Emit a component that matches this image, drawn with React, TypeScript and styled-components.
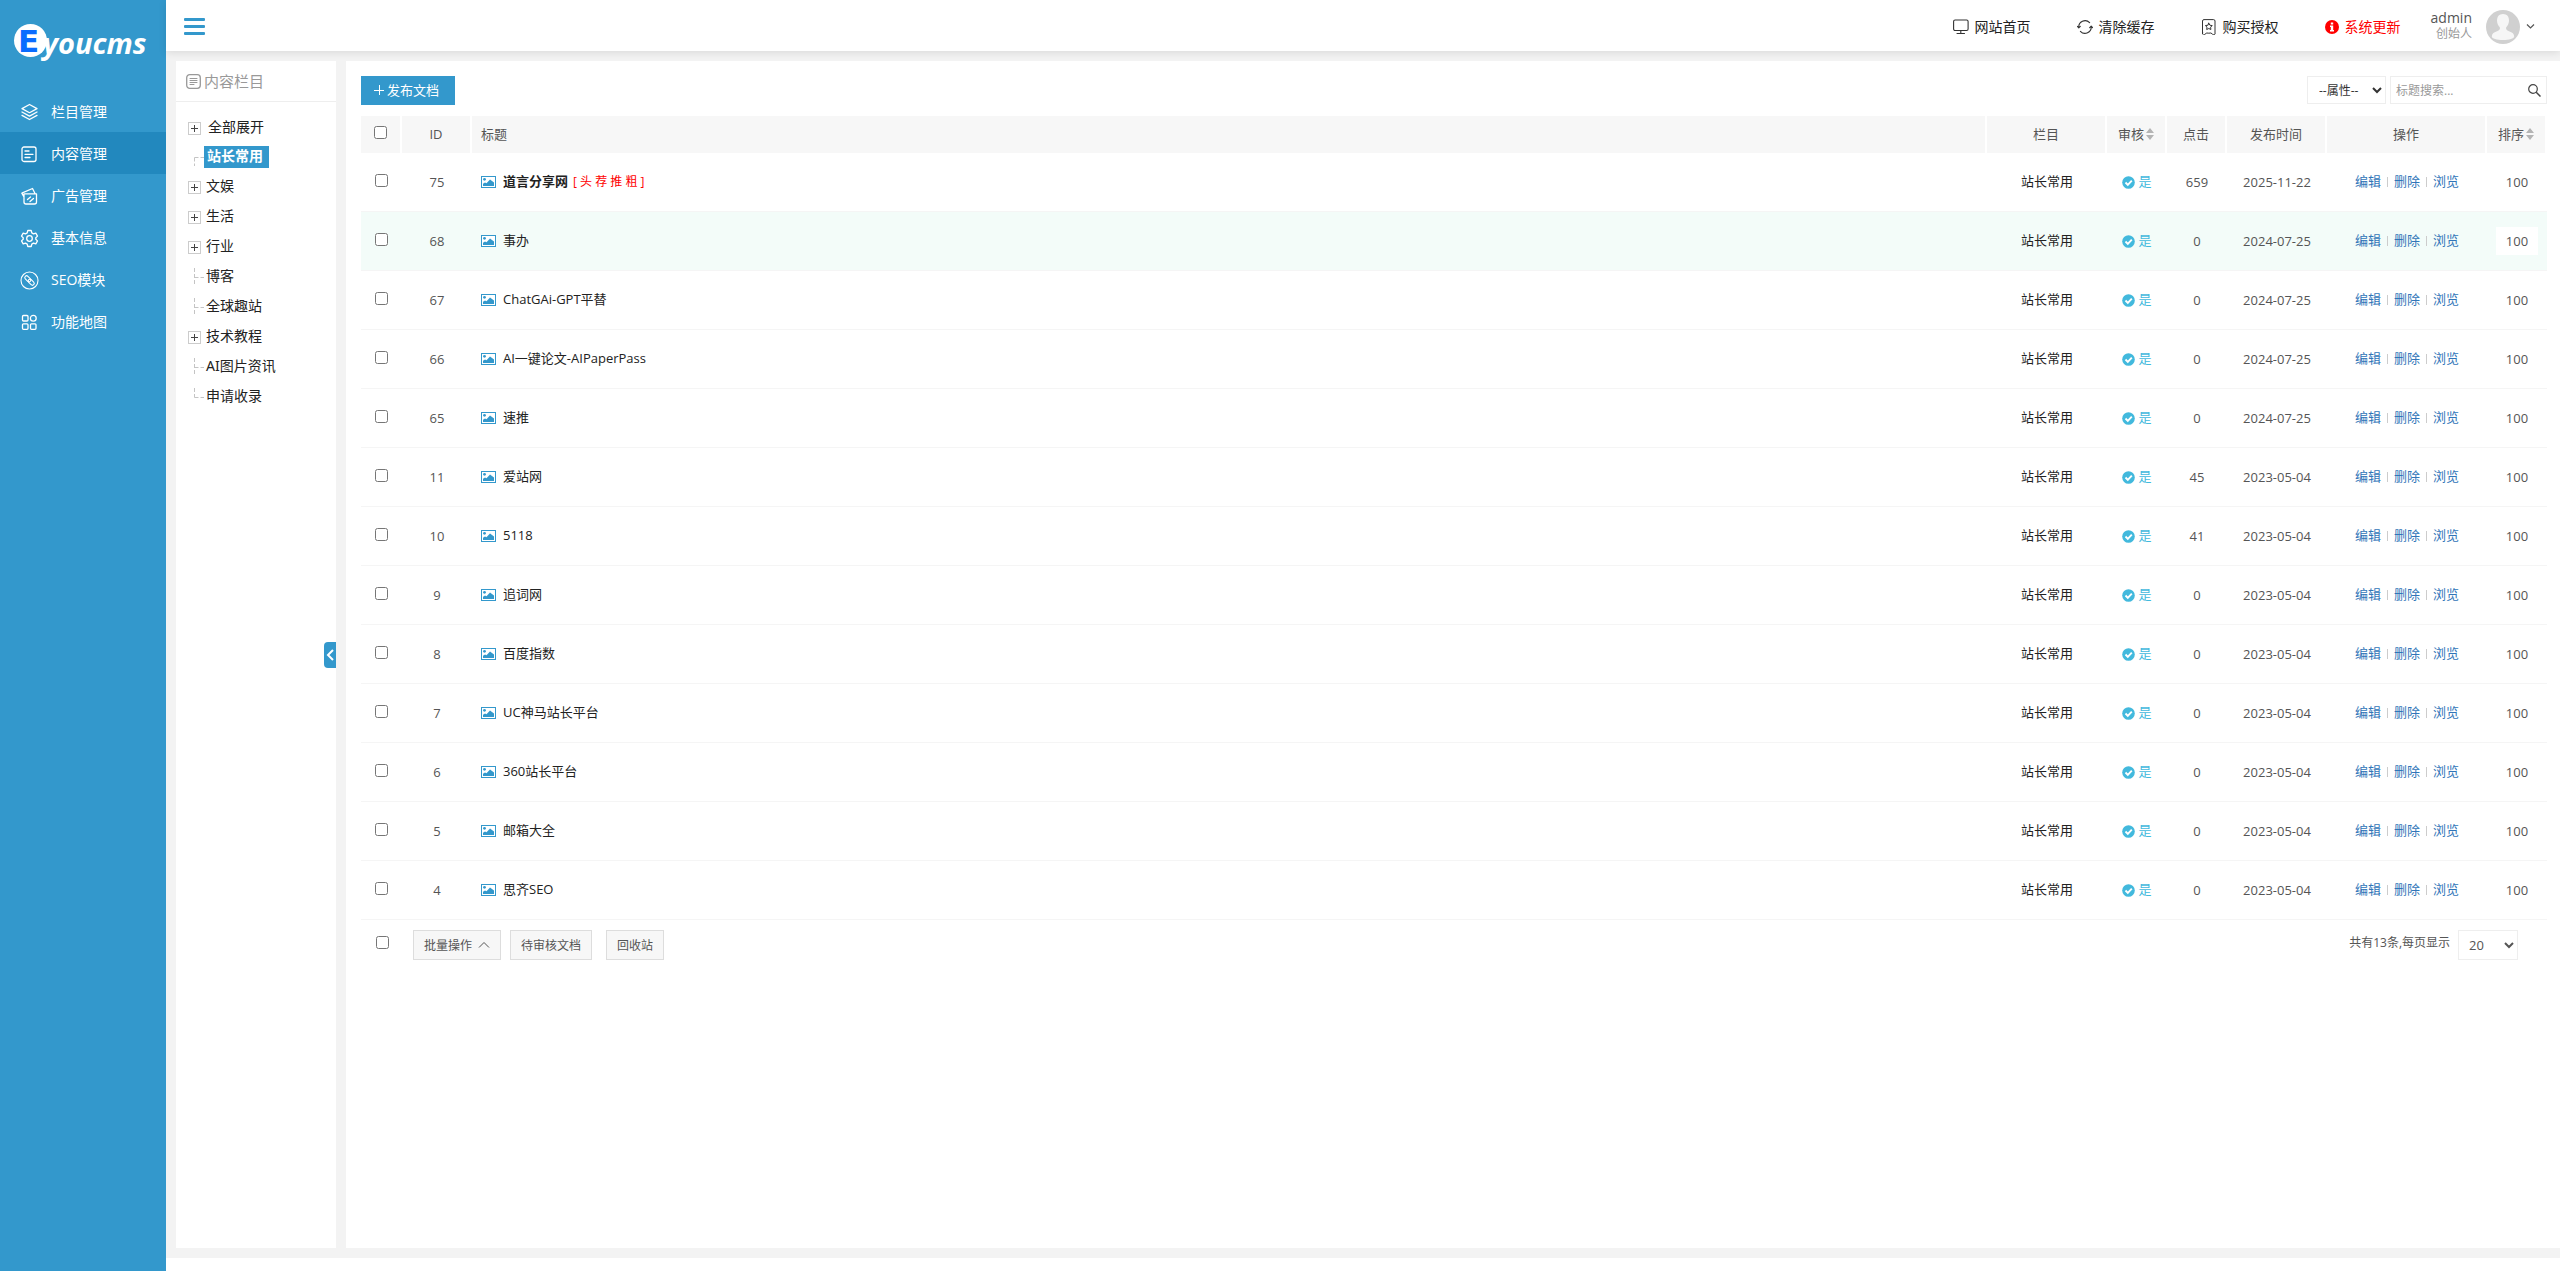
import React from "react";
import styled, { createGlobalStyle, css } from "styled-components";

const font = `"Open Sans", "Noto Sans CJK SC", sans-serif`;
const treeFont = `"Noto Sans", "Noto Sans CJK SC", sans-serif`;
const blue = "#3398cc";

const GlobalStyle = createGlobalStyle`
  *, *::before, *::after { box-sizing: border-box; }
  body { margin: 0; background: #fff; color: #222; font: 13px/20px ${font}; }
  button, input, select { font-family: inherit; }
  a { text-decoration: none; color: inherit; }
  ul { list-style: none; margin: 0; padding: 0; }
`;

const Shell = styled.div`
  display: flex;
  min-height: 100vh;
`;

/* ---------- sidebar ---------- */

const Sidebar = styled.aside`
  flex: 0 0 166px;
  background: ${blue};
`;

const LogoLink = styled.a`
  display: block;
  height: 90px;
  padding: 20px 0 0 12px;
`;

const NavLink = styled.a<{ $active?: boolean }>`
  display: flex;
  align-items: center;
  gap: 12px;
  height: 42px;
  padding: 2px 0 0 20px;
  color: #fff;
  font-size: 14px;
  background: ${(p) => (p.$active ? "#2288be" : "transparent")};
  svg { flex: none; }
`;

/* ---------- top bar ---------- */

const Page = styled.div`
  flex: 1;
  min-width: 0;
  display: flex;
  flex-direction: column;
`;

const TopBar = styled.header`
  position: relative;
  z-index: 1;
  display: flex;
  align-items: center;
  height: 51px;
  padding: 2px 25px 0 18px;
  background: #fff;
  box-shadow: 0 2px 8px rgba(0, 0, 0, 0.1);
`;

const PlainButton = styled.button`
  display: flex;
  align-items: center;
  padding: 0;
  border: 0;
  background: none;
  color: inherit;
  line-height: 20px;
  cursor: pointer;
`;

const TopLinks = styled.nav`
  display: flex;
  gap: 46px;
  margin: 0 30px 0 auto;
`;

const TopLink = styled.a<{ $alert?: boolean }>`
  display: flex;
  align-items: center;
  gap: 6px;
  font-size: 14px;
  color: ${(p) => (p.$alert ? "#f00" : "#222")};
`;

const Account = styled(PlainButton)`
  gap: 6px;
  svg { flex: none; }
`;

const AccountText = styled.span`
  display: flex;
  flex-direction: column;
  align-items: flex-end;
  margin-right: 8px;
  padding-bottom: 2px;
  font-size: 12px;
  line-height: 16px;
  color: #999;
`;

const AccountName = styled.span`
  font-size: 14px;
  color: #555;
`;

/* ---------- content ---------- */

const Content = styled.div`
  flex: 1;
  display: flex;
  gap: 10px;
  margin-bottom: 13px;
  padding: 10px 0 10px 10px;
  background: #f3f3f3;
`;

const TreePanel = styled.section`
  position: relative;
  flex: 0 0 160px;
  background: #fff;
`;

const TreeTitle = styled.h2`
  display: flex;
  align-items: center;
  gap: 3px;
  height: 41px;
  margin: 0;
  padding-left: 10px;
  border-bottom: 1px solid #eee;
  color: #999;
  font-size: 15px;
  font-weight: 400;
`;

const Tree = styled.ul`
  padding: 12px 0 0 12px;
  font-family: ${treeFont};
`;

const TreeRow = styled.li<{ $root?: boolean }>`
  display: flex;
  align-items: center;
  height: ${(p) => (p.$root ? 28 : 30)}px;
`;

const Expander = styled.button`
  display: flex;
  width: 13px;
  height: 13px;
  margin-right: 3px;
  padding: 0;
  border: 1px solid #ccc;
  background: #fff;
`;

const Branch = styled.svg`
  flex: none;
`;

const TreeLabel = styled.a<{ $active?: boolean; $root?: boolean }>`
  padding: 0 7px 2px ${(p) => (p.$root ? 4 : 2)}px;
  font-size: 14px;
  line-height: 20px;
  white-space: nowrap;
  ${(p) =>
    p.$active &&
    css`
      padding-left: 3px;
      padding-right: 6px;
      background: ${blue};
      color: #fff;
      font-weight: 700;
    `}
`;

const CollapseTab = styled.button`
  position: absolute;
  right: 0;
  top: 50%;
  display: flex;
  align-items: center;
  justify-content: center;
  width: 12px;
  height: 26px;
  padding: 0;
  border: 0;
  border-radius: 4px 0 0 4px;
  background: ${blue};
  transform: translateY(-50%);
`;

const Main = styled.main`
  flex: 1;
  min-width: 0;
  padding: 15px 13px 15px 15px;
  background: #fff;
`;

const Toolbar = styled.div`
  display: flex;
  gap: 4px;
  height: 29px;
  margin-bottom: 11px;
`;

const PublishButton = styled.button`
  display: flex;
  align-items: center;
  gap: 3px;
  width: 94px;
  margin-right: auto;
  padding: 0 0 2px 13px;
  border: 0;
  background: ${blue};
  color: #fff;
  font-size: 13px;
`;

const Select = styled.select`
  border: 1px solid #eee;
  background: #fff;
  color: #333;
  outline: 0;
  font-size: 12px;
`;

const AttributeSelect = styled(Select)`
  width: 79px;
  height: 28px;
  padding: 0 0 0 7px;
`;

const SearchBox = styled.form`
  display: flex;
  align-items: center;
  width: 157px;
  height: 28px;
  padding: 0 5px;
  border: 1px solid #eee;
`;

const SearchInput = styled.input`
  flex: 1;
  min-width: 0;
  padding: 0;
  border: 0;
  outline: 0;
  font-size: 12px;
  &::placeholder { color: #999; }
`;

/* ---------- table ---------- */

const Table = styled.table`
  width: 100%;
  table-layout: fixed;
  border-collapse: separate;
  border-spacing: 0;
`;

const Th = styled.th<{ $left?: boolean; $check?: boolean }>`
  height: 37px;
  padding: 0 ${(p) => (p.$left ? 9 : 0)}px ${(p) => (p.$check ? 0 : 2)}px;
  border-right: 2px solid #fff;
  background: #f7f7f7;
  color: #555;
  font-weight: 400;
  text-align: ${(p) => (p.$left ? "left" : "center")};
`;

const Row = styled.tr<{ $hover?: boolean }>`
  background: ${(p) => (p.$hover ? "#f3fcf9" : "#fff")};
`;

const Td = styled.td<{ $dark?: boolean; $text?: boolean }>`
  height: 59px;
  padding: 0 0 ${(p) => (p.$text ? 2 : 0)}px;
  border-bottom: 1px solid #f5f5f5;
  color: ${(p) => (p.$dark ? "#222" : "#555")};
  text-align: center;
`;

const Inline = styled.div<{ $gap?: number; $left?: boolean }>`
  display: flex;
  align-items: center;
  justify-content: ${(p) => (p.$left ? "flex-start" : "center")};
  gap: ${(p) => p.$gap ?? 0}px;
  padding-left: ${(p) => (p.$left ? 9 : 0)}px;
`;

const Check = styled.input`
  display: block;
  width: 13px;
  height: 13px;
  margin: 0 auto 4px;
`;

const TitleLink = styled.a<{ $bold?: boolean }>`
  padding-bottom: 2px;
  font-weight: ${(p) => (p.$bold ? 700 : 400)};
`;

const Flags = styled.span`
  margin-left: -2px;
  color: #f00;
  font-size: 12px;
`;

const Approved = styled(PlainButton)`
  gap: 3px;
  margin: 0 auto;
  color: #42b9dd;
  font-size: 13px;
`;

const ApprovedText = styled.span`
  padding-bottom: 2px;
`;

const ActionLink = styled.a`
  padding-bottom: 2px;
  color: #3175b8;
`;

const Divider = styled.span`
  width: 1px;
  height: 10px;
  background: #ccc;
`;

const SortInput = styled.input`
  display: block;
  width: 42px;
  height: 28px;
  margin: 0 auto;
  padding: 0;
  border: 0;
  background: #fff;
  color: #555;
  font-size: 13px;
  text-align: center;
`;

/* ---------- table footer ---------- */

const Footer = styled.div`
  display: flex;
  align-items: center;
  padding: 10px 29px 0 15px;
`;

const FooterCheck = styled(Check)`
  margin: 0 24px 5px 0;
`;

const FooterButton = styled.button<{ $gap: number }>`
  display: flex;
  align-items: center;
  gap: 6px;
  height: 30px;
  margin-right: ${(p) => p.$gap}px;
  padding: 0 10px;
  border: 1px solid #ddd;
  background: #f7f7f7;
  color: #555;
  font-size: 12px;
`;

const Summary = styled.label`
  display: flex;
  align-items: center;
  gap: 8px;
  margin-left: auto;
  color: #555;
  font-size: 12px;
`;

const SummaryText = styled.span`
  padding-bottom: 4px;
`;

const PageSize = styled(Select)`
  width: 60px;
  height: 30px;
  padding: 0 0 0 6px;
  color: #555;
  font-size: 13px;
`;

/* ---------- icons ---------- */

type LineProps = { size?: number; box?: number; color?: string; weight?: number; children: React.ReactNode };

const Line = ({ size = 19, box = 19, color = "#fff", weight = 1.3, children }: LineProps) => (
  <svg width={size} height={size} viewBox={`0 0 ${box} ${box}`} fill="none" stroke={color} strokeWidth={weight} strokeLinecap="round" strokeLinejoin="round" aria-hidden>
    {children}
  </svg>
);

const navIcons: Record<string, React.ReactNode> = {
  layers: (
    <Line>
      <path d="M9.5 1.500 17 5.600 9.500 9.700 2 5.600zM2 9l7.500 4.100L17 9M2 12.400l7.500 4.100L17 12.400" />
    </Line>
  ),
  doc: (
    <Line>
      <rect x="2" y="2" width="14" height="14.500" rx="2" />
      <path d="M5 6h4M5 9.300h8M5 12.500h5" />
    </Line>
  ),
  ad: (
    <Line>
      <path d="M4 6.800h12.500V15a2 2 0 0 1-2 2H6a2 2 0 0 1-2-2zM4 10 1.800 6.200 12.500 1.500l2.500 5M7.500 12.500 10.500 10M10 14.500l3.500-3" />
    </Line>
  ),
  gear: (
    <Line>
      <circle cx="9.500" cy="9.500" r="2.800" />
      <path d="M7.800 1.500h3.400l.6 2.400 1.700 1 2.300-.7 1.700 2.900-1.700 1.600v1.600l1.700 1.600-1.700 2.900-2.300-.7-1.700 1-.6 2.400H7.800l-.6-2.400-1.700-1-2.300.7-1.700-2.900 1.700-1.600V8.700L1.500 7.100l1.700-2.900 2.300.7 1.700-1z" />
    </Line>
  ),
  seo: (
    <Line weight={1.1}>
      <circle cx="9.500" cy="9.500" r="8.500" />
      <rect x="4.300" y="6" width="7" height="3.600" rx="1.800" transform="rotate(45 7.800 7.800)" />
      <rect x="7.700" y="9.400" width="7" height="3.600" rx="1.800" transform="rotate(45 11.200 11.200)" />
    </Line>
  ),
  grid: (
    <Line>
      <rect x="2.500" y="2.500" width="5.500" height="5.500" rx="1" />
      <circle cx="13.300" cy="5.200" r="2.900" />
      <rect x="2.500" y="10.800" width="5.500" height="5.500" rx="1" />
      <rect x="10.500" y="10.800" width="5.500" height="5.500" rx="1" />
    </Line>
  ),
};

const Logo = () => (
  <svg width="140" height="44" viewBox="12 20 140 44" aria-label="Eyoucms">
    <circle cx="30.500" cy="40.500" r="16.500" fill="#fff" />
    <text x="18" y="52" fontFamily="DejaVu Sans" fontWeight="700" fontSize="31" fill="#0a6cff">E</text>
    <text x="43" y="54" fontFamily="Open Sans" fontWeight="700" fontStyle="italic" fontSize="29" fill="#fff">youcms</text>
  </svg>
);

const MenuIcon = () => (
  <svg width="21" height="17" viewBox="0 0 21 17" fill={blue} aria-hidden>
    <rect y="0" width="21" height="3" rx="1" />
    <rect y="7" width="21" height="3" rx="1" />
    <rect y="14" width="21" height="3" rx="1" />
  </svg>
);

const MonitorIcon = () => (
  <Line size={16} box={16} color="#333" weight={1.1}>
    <rect x=".6" y="1" width="14.500" height="10.500" rx="1.500" />
    <path d="M7.800 11.500v3M4 14.500h7.500" />
  </Line>
);

const RefreshIcon = () => (
  <Line size={16} box={16} color="#333" weight={1.1}>
    <path d="M1.800 8.700a6.300 6.300 0 0 1 10.800-5M14.200 7.300a6.300 6.300 0 0 1-10.800 5M.4 7.300l1.400 1.600 1.500-1.600M12.700 8.700l1.500-1.600 1.400 1.600" />
  </Line>
);

const LicenseIcon = () => (
  <Line size={16} box={16} color="#333" weight={1}>
    <path d="M1.500 14V2A1.500 1.500 0 0 1 3 .6h9.500A1.500 1.500 0 0 1 14 2v12a1.300 1.300 0 0 1-2.500 1q-1.500-1.600-3.700-.8-2.200-.8-3.700.8a1.300 1.300 0 0 1-2.600-1z" />
    <path d="M7.800 4.200l1.100 2 2.300.4-1.600 1.600.3 2.300-2.100-1-2.100 1 .3-2.300-1.600-1.600 2.300-.4z" />
  </Line>
);

const AlertIcon = () => (
  <svg width="14" height="14" viewBox="0 0 14 14" aria-hidden>
    <circle cx="7" cy="7" r="7" fill="#f00" />
    <path d="M5.800 2.500h2.400v2H5.800zM5 5.500h3.200v4.500H9V11.500H5V10h.8V7H5z" fill="#fff" />
  </svg>
);

const Avatar = () => (
  <svg width="34" height="34" viewBox="0 0 34 34" aria-hidden>
    <circle cx="17" cy="17" r="17" fill="#d0d0d0" />
    <path d="M17 4c4 0 6 2.800 6 6.500 0 3-1.300 5.300-2.800 6.800-.6 2 .3 3 2.800 3.900 3.500 1.200 5.200 2.600 5.200 5.300 0 2.200-5.200 3.500-11.200 3.500S5.800 28.700 5.800 26.500c0-2.700 1.700-4.100 5.200-5.300 2.500-.9 3.400-1.900 2.800-3.900C12.300 15.800 11 13.500 11 10.500 11 6.800 13 4 17 4z" fill="#f6f6f6" />
  </svg>
);

const Chevron = ({ d = "M1 1.500 4.500 5 8 1.500", w = 9, h = 7, weight = 1.2 }) => (
  <svg width={w} height={h} viewBox={`0 0 ${w} ${h}`} fill="none" stroke="#555" strokeWidth={weight} aria-hidden>
    <path d={d} />
  </svg>
);

const ListIcon = () => (
  <Line size={15} box={15} color="#999">
    <rect x=".7" y=".7" width="13.600" height="13.600" rx="3" />
    <path d="M4 4.500h7M4 6.500h7M4 8.500h7M4 10.500h4" strokeWidth="1" />
  </Line>
);

const PictureIcon = () => (
  <svg width="15" height="12" viewBox="0 0 15 12" aria-hidden>
    <rect x=".5" y=".5" width="14" height="11" fill="#fff" stroke={blue} />
    <circle cx="3.500" cy="3.300" r="1.400" fill={blue} />
    <path d="M2 10V7.800l2-1.300 1.500.8L9 3.500l4 3v3.500z" fill={blue} />
  </svg>
);

const CheckedIcon = () => (
  <svg width="13" height="13" viewBox="0 0 13 13" aria-hidden>
    <circle cx="6.500" cy="6.500" r="6.300" fill="#42b9dd" />
    <path d="m3.500 6.500 2.300 2.300 4-4.200" fill="none" stroke="#fff" strokeWidth="1.900" />
  </svg>
);

const SortIcon = () => (
  <svg width="8" height="12" viewBox="0 0 8 12" fill="#b4b4b4" aria-hidden>
    <path d="M4 0 8 5H0zM4 12 8 7H0z" />
  </svg>
);

const SearchIcon = () => (
  <svg width="13" height="13" viewBox="0 0 13 13" fill="none" stroke="#444" aria-hidden>
    <circle cx="5" cy="5" r="4.300" strokeWidth="1.200" />
    <path d="m8.200 8.200 4.300 4.300" strokeWidth="1.500" />
  </svg>
);

const branchPaths = {
  first: "M6.500 9.500v9M6.500 9.500H16",
  middle: "M6.500 0v18M6.500 9.500H16",
  last: "M6.500 0v9.500M6.500 9.500H16",
};

/* ---------- data ---------- */

const nav = [
  ["layers", "栏目管理"],
  ["doc", "内容管理"],
  ["ad", "广告管理"],
  ["gear", "基本信息"],
  ["seo", "SEO模块"],
  ["grid", "功能地图"],
];

type Kind = "plus" | keyof typeof branchPaths;
const tree: { label: string; kind: Kind; root?: boolean; active?: boolean }[] = [
  { label: "全部展开", kind: "plus", root: true },
  { label: "站长常用", kind: "first", active: true },
  { label: "文娱", kind: "plus" },
  { label: "生活", kind: "plus" },
  { label: "行业", kind: "plus" },
  { label: "博客", kind: "middle" },
  { label: "全球趣站", kind: "middle" },
  { label: "技术教程", kind: "plus" },
  { label: "AI图片资讯", kind: "middle" },
  { label: "申请收录", kind: "last" },
];

const docs = [
  { id: 75, title: "道言分享网", flags: "[ 头 荐 推 粗 ]", clicks: 659, date: "2025-11-22" },
  { id: 68, title: "事办", clicks: 0, date: "2024-07-25", hover: true },
  { id: 67, title: "ChatGAi-GPT平替", clicks: 0, date: "2024-07-25" },
  { id: 66, title: "AI一键论文-AIPaperPass", clicks: 0, date: "2024-07-25" },
  { id: 65, title: "速推", clicks: 0, date: "2024-07-25" },
  { id: 11, title: "爱站网", clicks: 45, date: "2023-05-04" },
  { id: 10, title: "5118", clicks: 41, date: "2023-05-04" },
  { id: 9, title: "追词网", clicks: 0, date: "2023-05-04" },
  { id: 8, title: "百度指数", clicks: 0, date: "2023-05-04" },
  { id: 7, title: "UC神马站长平台", clicks: 0, date: "2023-05-04" },
  { id: 6, title: "360站长平台", clicks: 0, date: "2023-05-04" },
  { id: 5, title: "邮箱大全", clicks: 0, date: "2023-05-04" },
  { id: 4, title: "思齐SEO", clicks: 0, date: "2023-05-04" },
];

const columns = [41, 70, undefined, 120, 60, 60, 100, 160, 60];

export default function App() {
  return (
    <Shell>
      <GlobalStyle />
      <Sidebar>
        <LogoLink href="#home"><Logo /></LogoLink>
        <nav>
          {nav.map(([icon, label]) => (
            <NavLink key={icon} href={`#${icon}`} $active={icon === "doc"}>
              {navIcons[icon]}
              {label}
            </NavLink>
          ))}
        </nav>
      </Sidebar>

      <Page>
        <TopBar>
          <PlainButton type="button" aria-label="菜单"><MenuIcon /></PlainButton>
          <TopLinks>
            <TopLink href="#site"><MonitorIcon />网站首页</TopLink>
            <TopLink href="#cache"><RefreshIcon />清除缓存</TopLink>
            <TopLink href="#license"><LicenseIcon />购买授权</TopLink>
            <TopLink href="#update" $alert><AlertIcon />系统更新</TopLink>
          </TopLinks>
          <Account type="button">
            <AccountText>
              <AccountName>admin</AccountName>
              创始人
            </AccountText>
            <Avatar />
            <Chevron />
          </Account>
        </TopBar>

        <Content>
          <TreePanel>
            <TreeTitle><ListIcon />内容栏目</TreeTitle>
            <Tree>
              {tree.map((n) => (
                <TreeRow key={n.label} $root={n.root}>
                  {n.kind === "plus" ? (
                    <Expander type="button" aria-label={`展开${n.label}`}>
                      <svg width="11" height="11" stroke="#444" aria-hidden><path d="M2 5.500h7M5.500 2v7" /></svg>
                    </Expander>
                  ) : (
                    <Branch width="16" height="18" fill="none" stroke="#c4c4c4" strokeDasharray="4 2" aria-hidden>
                      <path d={branchPaths[n.kind]} />
                    </Branch>
                  )}
                  <TreeLabel href="#tree" $active={n.active} $root={n.root}>{n.label}</TreeLabel>
                </TreeRow>
              ))}
            </Tree>
            <CollapseTab type="button" aria-label="收起">
              <svg width="8" height="12" fill="none" stroke="#fff" strokeWidth="2" aria-hidden><path d="M7 1 2 6l5 5" /></svg>
            </CollapseTab>
          </TreePanel>

          <Main>
            <Toolbar>
              <PublishButton type="button">
                <svg width="10" height="10" stroke="#fff" aria-hidden><path d="M0 5.500h10M5.500 0v10" /></svg>
                发布文档
              </PublishButton>
              <AttributeSelect aria-label="属性"><option>--属性--</option></AttributeSelect>
              <SearchBox>
                <SearchInput type="text" placeholder="标题搜索..." aria-label="标题搜索" />
                <PlainButton type="button" aria-label="搜索"><SearchIcon /></PlainButton>
              </SearchBox>
            </Toolbar>

            <Table>
              <colgroup>
                {columns.map((w, i) => <col key={i} width={w} />)}
              </colgroup>
              <thead>
                <tr>
                  <Th $check><Check type="checkbox" aria-label="全选" /></Th>
                  <Th>ID</Th>
                  <Th $left>标题</Th>
                  <Th>栏目</Th>
                  <Th><Inline $gap={2}>审核<SortIcon /></Inline></Th>
                  <Th>点击</Th>
                  <Th>发布时间</Th>
                  <Th>操作</Th>
                  <Th><Inline $gap={2}>排序<SortIcon /></Inline></Th>
                </tr>
              </thead>
              <tbody>
                {docs.map((d) => (
                  <Row key={d.id} $hover={d.hover}>
                    <Td><Check type="checkbox" aria-label={`选择 ${d.id}`} /></Td>
                    <Td>{d.id}</Td>
                    <Td $dark>
                      <Inline $left $gap={7}>
                        <PictureIcon />
                        <TitleLink href="#doc" $bold={!!d.flags}>{d.title}</TitleLink>
                        {d.flags && <Flags>{d.flags}</Flags>}
                      </Inline>
                    </Td>
                    <Td $dark $text>站长常用</Td>
                    <Td><Approved type="button"><CheckedIcon /><ApprovedText>是</ApprovedText></Approved></Td>
                    <Td>{d.clicks}</Td>
                    <Td>{d.date}</Td>
                    <Td>
                      <Inline $gap={6}>
                        <ActionLink href="#edit">编辑</ActionLink>
                        <Divider />
                        <ActionLink href="#delete">删除</ActionLink>
                        <Divider />
                        <ActionLink href="#view">浏览</ActionLink>
                      </Inline>
                    </Td>
                    <Td><SortInput type="text" defaultValue="100" aria-label={`排序 ${d.id}`} /></Td>
                  </Row>
                ))}
              </tbody>
            </Table>

            <Footer>
              <FooterCheck type="checkbox" aria-label="全选" />
              <FooterButton type="button" $gap={9}>
                批量操作
                <Chevron d="M1 6.500 6 1.500l5 5" w={12} h={8} weight={1} />
              </FooterButton>
              <FooterButton type="button" $gap={14}>待审核文档</FooterButton>
              <FooterButton type="button" $gap={0}>回收站</FooterButton>
              <Summary>
                <SummaryText>共有13条,每页显示</SummaryText>
                <PageSize defaultValue="20"><option>20</option></PageSize>
              </Summary>
            </Footer>
          </Main>
        </Content>
      </Page>
    </Shell>
  );
}
